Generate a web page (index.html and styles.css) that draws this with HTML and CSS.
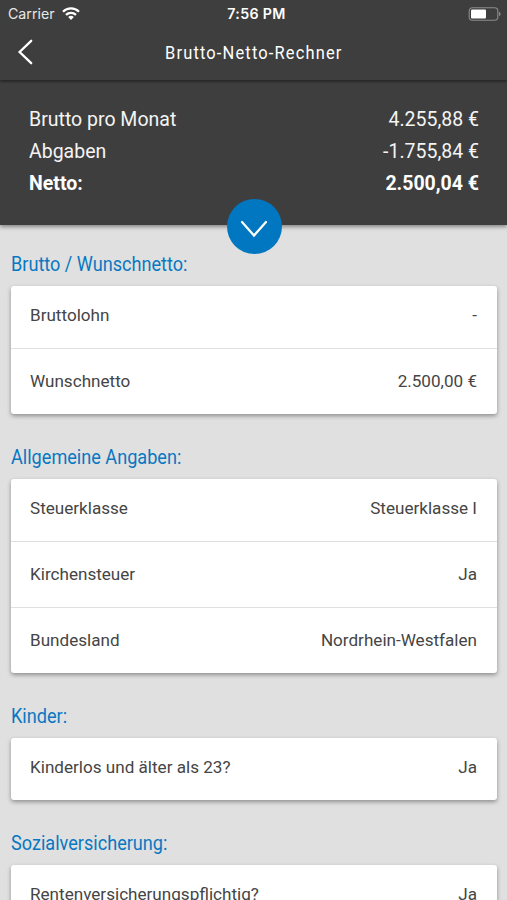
FILE: index.html
```html
<!DOCTYPE html>
<html lang="de">
<head>
<meta charset="utf-8">
<title>Brutto-Netto-Rechner</title>
<link rel="stylesheet" href="styles.css">
</head>
<body>
<div class="app">
  <div class="status">
    <div class="carrier"><span>Carrier</span>
      <svg width="18" height="14" viewBox="0 0 18 14"><g fill="none" stroke="#fff" stroke-width="2.3"><path d="M1 4.7a11.4 11.4 0 0 1 16 0"/><path d="M4 7.9a7.1 7.1 0 0 1 10 0"/></g><path d="M9 12.9L6.2 10.1a4 4 0 0 1 5.6 0z" fill="#fff"/></svg>
    </div>
    <div class="time">7:56 PM</div>
    <svg class="battery" width="33" height="14" viewBox="0 0 33 14"><rect x="1.2" y=".7" width="28.6" height="12.6" rx="3.2" fill="none" stroke="#8c8c8c" stroke-width="1.1"/><rect x="3" y="2.4" width="15" height="9.2" rx="1" fill="#fff"/><path d="M31 4.8q1.6.6 1.6 2.2T31 9.200z" fill="#8c8c8c"/></svg>
  </div>
  <header class="nav">
    <svg class="back" width="16" height="26" viewBox="0 0 16 26"><path d="M14.2 1.8L2.6 13l11.6 11.2" fill="none" stroke="#fff" stroke-width="2.3" stroke-linecap="round"/></svg>
    <h1><span>Brutto-Netto-Rechner</span></h1>
  </header>
  <section class="summary">
    <div class="sum"><span>Brutto pro Monat</span><span>4.255,88 €</span></div>
    <div class="sum"><span>Abgaben</span><span>-1.755,84 €</span></div>
    <div class="sum total"><span>Netto:</span><span>2.500,04 €</span></div>
    <div class="toggle"><svg width="28" height="18" viewBox="0 0 28 18"><path d="M2 2l12 13.500L26 2" fill="none" stroke="#fff" stroke-width="2.2" stroke-linecap="round"/></svg></div>
  </section>
  <main>
    <h2><span>Brutto / Wunschnetto:</span></h2>
    <div class="card">
      <div class="row"><span>Bruttolohn</span><span>-</span></div>
      <div class="row"><span>Wunschnetto</span><span>2.500,00 €</span></div>
    </div>
    <h2><span>Allgemeine Angaben:</span></h2>
    <div class="card">
      <div class="row"><span>Steuerklasse</span><span>Steuerklasse I</span></div>
      <div class="row"><span>Kirchensteuer</span><span>Ja</span></div>
      <div class="row"><span>Bundesland</span><span>Nordrhein-Westfalen</span></div>
    </div>
    <h2><span>Kinder:</span></h2>
    <div class="card">
      <div class="row"><span>Kinderlos und älter als 23?</span><span>Ja</span></div>
    </div>
    <h2><span>Sozialversicherung:</span></h2>
    <div class="card">
      <div class="row"><span>Rentenversicherungspflichtig?</span><span>Ja</span></div>
    </div>
  </main>
</div>
</body>
</html>
```
FILE: styles.css
```css
* { box-sizing: border-box; }
body { margin: 0; font-family: Roboto, "Liberation Sans", sans-serif; background: #e0e0e0; }
.app { height: 900px; overflow: hidden; }
.status { height: 27px; background: #3e3e3e; color: #fff; display: grid; grid-template-columns: 1fr auto 1fr; align-items: center; padding: 0 6px 0 8px; font: 14.2px Inter, sans-serif; }
.carrier { display: flex; align-items: center; gap: 7px; color: #e8e8e8; }
.time { font-weight: 600; font-size: 14.2px; letter-spacing: .35px; padding-left: 4px; }
.battery { justify-self: end; }
.nav { position: relative; height: 53px; background: #3e3e3e; color: #fff; display: grid; grid-template-columns: 1fr auto 1fr; align-items: center; padding: 0 17px 3px; box-shadow: 0 2px 2px rgba(0,0,0,.35); z-index: 1; }
h1 { margin: 0; padding-top: 1px; font-size: 18.5px; font-weight: 400; width: 178px; letter-spacing: 1.3px; white-space: nowrap; }
h1 span { display: inline-block; transform: scaleX(.89); transform-origin: left; }
.summary { position: relative; height: 145px; padding: 24px 28px 0 29px; background: #3e3e3e; color: #f4f4f4; box-shadow: 0 2px 4px rgba(0,0,0,.4); }
.sum { display: flex; justify-content: space-between; height: 32px; line-height: 32px; font-size: 19.5px; }
.total { font-weight: 700; color: #fff; }
.toggle { position: absolute; left: 226.5px; top: 119px; width: 55px; height: 55px; border-radius: 50%; background: #0077c0; display: flex; align-items: center; justify-content: center; padding-top: 5px; }
main { padding: 20px 10px 0 11px; }
h2 { margin: 0; height: 41px; line-height: 39px; font-size: 21px; font-weight: 400; color: #0878c2; white-space: nowrap; }
h2 span { display: inline-block; transform: scaleX(.862); transform-origin: left; }
.card { background: #fff; border-radius: 3px; margin-bottom: 24px; box-shadow: 0 2px 4px rgba(0,0,0,.36); }
.row { height: 62px; display: flex; align-items: center; justify-content: space-between; padding: 0 20px 5px 19px; font-size: 17.1px; color: #454545; }
.row + .row { height: 66px; border-top: 1px solid #e0e0e0; padding-bottom: 1px; }
```
